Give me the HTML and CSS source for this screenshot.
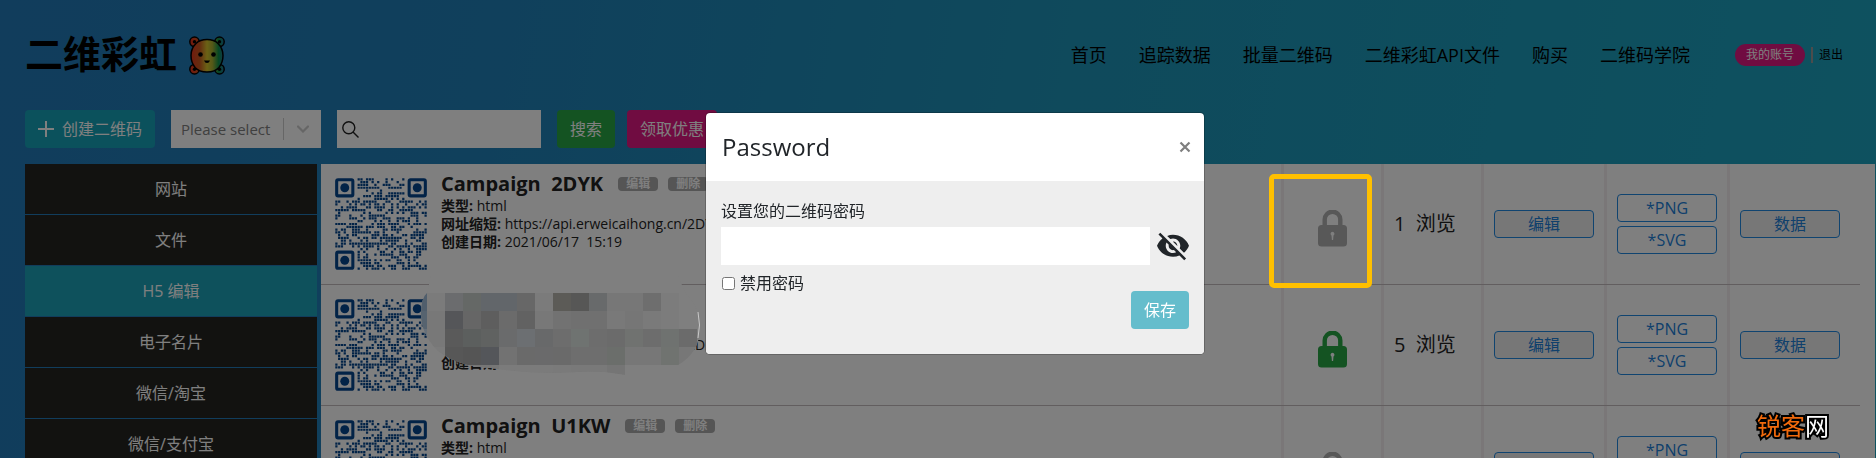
FILE: index.html
```html
<!DOCTYPE html>
<html lang="zh-CN">
<head>
<meta charset="utf-8">
<title>二维彩虹</title>
<link rel="stylesheet" href="styles.css">
</head>
<body>
<svg class="sprite" aria-hidden="true">
  <symbol id="qr" viewBox="0 0 33 33">
    <path id="qr-dots" fill="#04468e"/>
    <g fill="none" stroke="#04468e" stroke-width="1.1">
      <rect x=".6" y=".6" width="5.8" height="5.8" rx=".5"/>
      <rect x="26.6" y=".6" width="5.8" height="5.8" rx=".5"/>
      <rect x=".6" y="26.6" width="5.8" height="5.8" rx=".5"/>
    </g>
    <g fill="#04468e"><circle cx="3.5" cy="3.5" r="1.6"/><circle cx="29.5" cy="3.5" r="1.6"/><circle cx="3.5" cy="29.5" r="1.6"/></g>
  </symbol>
  <symbol id="lock" viewBox="0 0 29 37">
    <path d="M6.7 17V9.5a7.8 7.8 0 0 1 15.6 0V17" fill="none" stroke="currentColor" stroke-width="4.4"/>
    <path fill="currentColor" fill-rule="evenodd" d="M3.5 15h22a3.5 3.5 0 0 1 3.5 3.500v14.500a3.500 3.500 0 0 1-3.500 3.500h-22a3.500 3.500 0 0 1-3.500-3.500v-14.500a3.500 3.500 0 0 1 3.500-3.500zM14.500 21.800a2 2 0 0 0-1 3.700l.4 4.500h1.200l.4-4.500a2 2 0 0 0-1-3.700z"/>
  </symbol>
</svg>

<div class="page">
  <header class="header">
    <a class="brand" href="#">
      <span class="brand-name">二维彩虹</span>
      <svg class="brand-bear" viewBox="0 0 36 39" aria-hidden="true">
        <defs><linearGradient id="rainbow" x1="0" y1="0" x2="36" y2="0" gradientUnits="userSpaceOnUse"><stop offset=".05" stop-color="#e8341c"/><stop offset=".3" stop-color="#c95a20"/><stop offset=".5" stop-color="#d8c42c"/><stop offset=".65" stop-color="#a8b030"/><stop offset=".82" stop-color="#109048"/><stop offset="1" stop-color="#2068b0"/></linearGradient></defs>
        <g fill="url(#rainbow)" stroke="#000" stroke-width="1.500">
          <circle cx="5.500" cy="5.800" r="4.700"/><circle cx="30.500" cy="5.800" r="4.700"/><circle cx="5.500" cy="33.200" r="4.700"/><circle cx="30.500" cy="33.200" r="4.700"/>
          <path d="M18 3.500c5 0 8 1 11 4 4 4 5 8 5 12s-1 8-4 12c-3 3.500-7 4.500-12 4.500s-9-1-12-4.500c-3-4-4-8-4-12s1-8 5-12c3-3 6-4 11-4z"/>
        </g>
        <circle cx="5.500" cy="5.800" r="1.700"/><circle cx="30.500" cy="5.800" r="1.700"/><circle cx="5.500" cy="33.200" r="1.700"/><circle cx="30.500" cy="33.200" r="1.700"/>
        <circle cx="11.500" cy="18.500" r="2.300"/><circle cx="24.500" cy="18.500" r="2.300"/>
        <path d="M15 24.500h6q-1 2.500-3 2.500t-3-2.500z"/>
      </svg>
    </a>
    <nav class="nav">
      <a href="#">首页</a><a href="#">追踪数据</a><a href="#">批量二维码</a><a href="#">二维彩虹API文件</a><a href="#">购买</a><a href="#">二维码学院</a>
    </nav>
    <div class="account"><a class="account-pill" href="#">我的账号</a><a class="logout" href="#">退出</a></div>
  </header>

  <div class="toolbar">
    <button class="btn btn-info" type="button"><svg class="plus" viewBox="0 0 16 16" aria-hidden="true"><path d="M8 0v16M0 8h16" stroke="currentColor" stroke-width="2"/></svg>创建二维码</button>
    <div class="filter">
      <select class="filter-select" aria-label="筛选"><option>Please select</option></select>
      <svg class="filter-arrow" viewBox="0 0 12 8" aria-hidden="true"><path d="M1 1.500l5 5 5-5" fill="none" stroke="#ccc" stroke-width="2.200" stroke-linecap="round"/></svg>
    </div>
    <label class="search">
      <svg class="search-icon" viewBox="0 0 17 17" aria-hidden="true"><g fill="none" stroke="#222" stroke-width="1.400"><circle cx="6.800" cy="6.800" r="6"/><path d="M11 11l5.500 5.500"/></g></svg>
      <input class="search-input" type="text" aria-label="搜索">
    </label>
    <div class="actions">
      <button class="btn btn-success" type="button">搜索</button>
      <button class="btn btn-pink" type="button">领取优惠</button>
    </div>
  </div>

  <div class="content">
    <nav class="sidebar">
      <a href="#">网站</a><a href="#">文件</a><a class="active" href="#">H5 编辑</a><a href="#">电子名片</a><a href="#">微信/淘宝</a><a href="#">微信/支付宝</a>
    </nav>
    <main class="list">
      <article class="row">
        <div class="summary">
          <svg class="qr" role="img" aria-label="QR"><use href="#qr"/></svg>
          <div class="info">
            <div class="info-head"><h2>Campaign  2DYK</h2><button class="tag" type="button">编辑</button><button class="tag" type="button">删除</button></div>
            <p><b>类型:</b> html</p>
            <p><b>网址缩短:</b> https://api.erweicaihong.cn/2DYK</p>
            <p><b>创建日期:</b> 2021/06/17  15:19</p>
          </div>
        </div>
        <div class="cell cell-lock"><svg class="lock"><use href="#lock"/></svg><span class="highlight"></span></div>
        <div class="cell views">1  浏览</div>
        <div class="cell"><button class="outline tinted" type="button">编辑</button></div>
        <div class="cell"><button class="outline" type="button">*PNG</button><button class="outline" type="button">*SVG</button></div>
        <div class="cell"><button class="outline tinted" type="button">数据</button></div>
      </article>
      <article class="row">
        <div class="summary">
          <svg class="qr" role="img" aria-label="QR"><use href="#qr"/></svg>
          <div class="info">
            <div class="info-head"></div>
            <p></p>
            <p><b>网址缩短:</b> https://api.erweicaihong.cn/2D</p>
            <p><b>创建日期:</b></p>
          </div>
          <svg class="redaction" viewBox="0 0 280 104" aria-hidden="true">
            <defs><clipPath id="blob"><path d="M10 0H257L264 16Q279 32 279 52Q279 76 257 89H205V99L184 96Q165 95 138 97Q100 97 70 92Q38 91 17 75Q0 58 0 38Q0 22 6 17z"/></clipPath></defs>
            <g clip-path="url(#blob)" id="mosaic"><rect width="280" height="104" fill="#7f7f7f"/></g>
            <path d="M277 36q3 13 0 26" fill="none" stroke="#c8c8c8" stroke-width="1"/>
          </svg>
        </div>
        <div class="cell cell-lock"><svg class="lock lock-on"><use href="#lock"/></svg></div>
        <div class="cell views">5  浏览</div>
        <div class="cell"><button class="outline tinted" type="button">编辑</button></div>
        <div class="cell"><button class="outline" type="button">*PNG</button><button class="outline" type="button">*SVG</button></div>
        <div class="cell"><button class="outline tinted" type="button">数据</button></div>
      </article>
      <article class="row">
        <div class="summary">
          <svg class="qr" role="img" aria-label="QR"><use href="#qr"/></svg>
          <div class="info">
            <div class="info-head"><h2>Campaign  U1KW</h2><button class="tag" type="button">编辑</button><button class="tag" type="button">删除</button></div>
            <p><b>类型:</b> html</p>
          </div>
        </div>
        <div class="cell cell-lock"><svg class="lock"><use href="#lock"/></svg></div>
        <div class="cell views"></div>
        <div class="cell"><button class="outline tinted" type="button" aria-label="编辑"></button></div>
        <div class="cell"><button class="outline" type="button">*PNG</button><button class="outline" type="button" aria-label="*SVG"></button></div>
        <div class="cell"><button class="outline tinted" type="button" aria-label="数据"></button></div>
      </article>
    </main>
  </div>
</div>

<div class="backdrop"></div>
<div class="modal-layer">
  <section class="modal" role="dialog" aria-labelledby="modal-title">
    <header class="modal-header">
      <h1 id="modal-title">Password</h1>
      <button class="close" type="button" aria-label="Close"><svg viewBox="0 0 12 12"><path d="M1.500 1.500l9 9M10.500 1.500l-9 9" stroke="currentColor" stroke-width="2.200"/></svg></button>
    </header>
    <div class="modal-body">
      <label class="field-label" for="pw">设置您的二维码密码</label>
      <div class="field">
        <input class="field-input" id="pw" type="password">
        <button class="eye" type="button" aria-label="显示密码"><svg viewBox="1 2 22 21"><path fill="#212529" d="M12 7c2.760 0 5 2.240 5 5 0 .650-.130 1.260-.360 1.830l2.920 2.920c1.510-1.260 2.700-2.890 3.430-4.750-1.730-4.390-6-7.500-11-7.500-1.400 0-2.740.250-3.980.700l2.160 2.160C10.740 7.130 11.350 7 12 7zM2 4.270l2.280 2.280.460.460C3.080 8.300 1.780 10.020 1 12c1.730 4.390 6 7.500 11 7.500 1.550 0 3.030-.300 4.380-.840l.420.420L19.730 22 21 20.730 3.270 3 2 4.270zM7.530 9.800l1.550 1.550c-.050.210-.080.430-.080.650 0 1.660 1.340 3 3 3 .220 0 .440-.030.650-.080l1.550 1.550c-.670.330-1.410.530-2.200.530-2.760 0-5-2.240-5-5 0-.790.200-1.530.530-2.200zm4.310-.780l3.150 3.150.020-.160c0-1.660-1.340-3-3-3l-.170.010z"/></svg></button>
      </div>
      <label class="check"><input type="checkbox">禁用密码</label>
      <div class="modal-actions"><button class="btn btn-save" type="button">保存</button></div>
    </div>
  </section>
</div>
<div class="watermark"><span>锐客</span>网</div>
<script src="app.js"></script>
</body>
</html>
```
FILE: styles.css
```css
*, *::before, *::after { box-sizing: border-box; }
body {
  margin: 0;
  font: 16px/24px "Open Sans", "Noto Sans CJK SC", sans-serif;
  color: #212529;
}
a { color: inherit; text-decoration: none; }
button, input, select { font: inherit; color: inherit; }
button { padding: 0; border: 0; background: none; }
h1, h2, p { margin: 0; font-weight: 400; }
.sprite { position: absolute; width: 0; height: 0; }

.page {
  height: 100vh;
  overflow: hidden;
  background: linear-gradient(100deg, #227ab8, #2080b8 25%, #1e94b8 55%, #1ca4c0);
}

.header {
  display: flex;
  align-items: center;
  height: 110px;
  padding: 0 33px 0 25px;
  font-size: 18px;
  color: #000;
}
.brand { display: flex; align-items: center; gap: 12px; margin-right: auto; }
.brand-name { padding-bottom: 6px; font: 700 38px/40px "Noto Sans CJK SC", sans-serif; }
.brand-bear { width: 36px; height: 39px; }
.nav { display: flex; gap: 32px; }
.account { display: flex; align-items: center; gap: 6px; margin-left: 45px; font-size: 12px; line-height: 16px; }
.account-pill {
  padding: 3px 11px;
  border-radius: 11px;
  background: #e01882;
  color: #fff;
}
.logout { padding-left: 6px; border-left: 2px solid #999; }

.toolbar { display: flex; gap: 16px; height: 54px; padding-left: 25px; align-items: flex-start; }
.btn {
  height: 38px;
  padding: 0 13px;
  border-radius: 4px;
  color: #fff;
  white-space: nowrap;
}
.btn-info { display: flex; align-items: center; gap: 8px; background: #17a2b8; }
.btn-success { background: #28a745; }
.btn-pink { background: #e01882; }
.plus { width: 16px; height: 16px; }
.actions { display: flex; gap: 12px; }
.filter {
  display: flex;
  align-items: center;
  width: 150px;
  height: 38px;
  padding-right: 12px;
  background: #fff;
}
.filter-select {
  flex: 1;
  height: 22px;
  min-width: 0;
  margin-right: 13px;
  padding: 0 0 0 10px;
  border: 0;
  border-right: 1px solid #ccc;
  background: none;
  color: #808080;
  font-size: 15px;
  line-height: 20px;
  appearance: none;
}
.filter-arrow { width: 12px; height: 8px; }
.search { display: flex; align-items: center; width: 204px; height: 38px; padding: 0 5px; background: #fff; }
.search-icon { width: 17px; height: 17px; }
.search-input { flex: 1; min-width: 0; border: 0; background: none; }

.content { display: grid; grid-template-columns: 292px 1fr; gap: 4px; padding: 0 1px 0 25px; }
.sidebar a {
  display: block;
  height: 51px;
  padding-top: 13px;
  border-bottom: 1px solid #227ab8;
  background: #242420;
  color: #fff;
  text-align: center;
}
.sidebar .active { background: #1ca2b8; }

.list { padding-right: 15px; background: #fff; color: #222; }
.row {
  display: grid;
  grid-template-columns: 1fr 100px 100px 123px 123px 133px;
  grid-template-rows: 120px;
  border-bottom: 1px solid #c4bcbe;
}
.summary { position: relative; display: flex; gap: 14px; padding: 7px 0 0 14px; min-width: 0; }
.qr { width: 92px; height: 92px; margin-top: 7px; }
.info { font-size: 14px; line-height: 18px; }
.info p { min-height: 18px; white-space: pre; }
.info-head { display: flex; align-items: center; gap: 10px; height: 26px; }
.info-head h2 { margin-right: 5px; font-size: 20px; line-height: 26px; font-weight: 700; white-space: pre; }
.info-head .tag { height: 14px; width: 40px; border-radius: 4px; background: #aaa; color: #fff; font-size: 12px; line-height: 14px; font-weight: 700; }
.cell {
  position: relative;
  display: flex;
  flex-direction: column;
  justify-content: center;
  gap: 4px;
  padding: 0 10px;
  border-left: 3px solid #f5eff0;
}
.cell-lock { align-items: center; }
.views { font-size: 20px; white-space: pre; }
.lock { width: 29px; height: 37px; margin-top: 8px; color: #b0b0b0; }
.lock-on { color: #28a745; }
.outline {
  width: 100px;
  height: 28px;
  border: 1px solid #2088e0;
  border-radius: 4px;
  color: #2080d8;
}
.tinted { background: #efefef; }

.highlight {
  position: absolute;
  z-index: 3;
  left: -15px;
  top: 10px;
  width: 103px;
  height: 114px;
  border: 5px solid #ffc000;
  border-radius: 5px;
}
.redaction { position: absolute; z-index: 3; left: 100px; top: -9px; width: 280px; height: 104px; }

.backdrop { position: fixed; inset: 0; z-index: 2; background: rgba(0, 0, 0, .5); }
.modal-layer {
  position: fixed;
  inset: 0;
  z-index: 4;
  display: flex;
  justify-content: center;
  align-items: flex-start;
  padding: 112px 0 0 34px;
  pointer-events: none;
}
.modal {
  width: 500px;
  overflow: hidden;
  border: 1px solid rgba(0, 0, 0, .2);
  border-radius: 5px;
  background: #fff;
  background-clip: padding-box;
  pointer-events: auto;
}
.modal-header { display: flex; align-items: center; justify-content: space-between; height: 68px; padding: 0 13px 0 16px; }
.modal-header h1 { font-size: 24px; line-height: 32px; }
.close { display: flex; color: #7f7f7f; }
.close svg { width: 12px; height: 12px; }
.modal-body { padding: 18px 15px 25px; background: #eee; }
.field-label { display: block; }
.field { display: flex; align-items: center; gap: 7px; margin-top: 4px; }
.field-input { flex: 1; min-width: 0; height: 38px; border: 0; background: #fff; }
.eye { width: 32px; height: 31px; }
.eye svg { display: block; width: 32px; height: 31px; }
.check { display: flex; align-items: center; gap: 5px; margin-top: 10px; line-height: 16px; }
.check input { width: 13px; height: 13px; margin: 0 0 0 1px; }
.modal-actions { display: flex; justify-content: flex-end; }
.btn-save { background: #65bdcc; }

.watermark {
  position: fixed;
  z-index: 5;
  right: 47px;
  bottom: 16px;
  font-size: 24px;
  line-height: 32px;
  color: #fff;
  -webkit-text-stroke: 4px #000;
  paint-order: stroke fill;
}
.watermark span { color: #f26a0c; }
```
FILE: app.js
```js
// QR body: everything outside the three finder squares.
let seed = 20210617;
const next = () => (seed = (seed * 1103515245 + 12345) % 2147483648) / 2147483648;
let d = "";
for (let y = 0; y < 33; y++) {
  for (let x = 0; x < 33; x++) {
    const finder = (x < 8 && y < 8) || (x > 24 && y < 8) || (x < 8 && y > 24);
    if (next() < 0.5 && !finder) d += `M${x + 0.1} ${y + 0.1}h.8v.8h-.8z`;
  }
}
document.getElementById("qr-dots").setAttribute("d", d);

// Mosaic tiles, one array per 18px band; null leaves the base grey.
const tiles = [
  ["#505e6c", "#7b7b7b", "#6b6c6e", "#656866", "#62666a", "#62666a", "#676767", "#7b7b7b", "#5c5b57", "#575756", "#686a6b", "#777777", "#777777", "#6e6e6e", "#7c7c7c", null],
  ["#56636f", "#787878", "#555659", "#666666", "#5e5e5e", "#6b6b6b", "#626262", "#787878", "#727272", "#707070", "#707070", "#797979", "#767676", "#7a7a7a", "#7c7c7c", null],
  ["#66707a", "#787878", "#5a5a5a", "#5c5f5e", "#606261", "#6a6b6c", "#6c6f72", "#68696a", "#6d6d6d", "#6f7371", "#6d6d6d", "#6b6b6b", "#707270", "#6d6d6d", "#6f7270", "#6b6b6b"],
  [null, "#7b7b7b", "#575757", "#555555", "#54565a", "#727272", "#6a6a6a", "#6a6a6b", "#6a6a6a", "#6e6e6e", "#6e6e6e", "#6b6e6b", "#777777", "#777777", "#707370", "#777777"],
  [null, null, "#767676", "#767676", "#767676", "#7b7b7b", "#7b7b7b", "#7b7b7b", "#7a7a7a", "#797979", "#797979", "#757575", null, null, null, null]
];
const mosaic = document.getElementById("mosaic");
tiles.forEach((band, r) => band.forEach((fill, c) => {
  if (!fill) return;
  const t = document.createElementNS("http://www.w3.org/2000/svg", "rect");
  t.setAttribute("x", c * 18 - 12);
  t.setAttribute("y", 17 + r * 18);
  t.setAttribute("width", 18);
  t.setAttribute("height", 18);
  t.setAttribute("fill", fill);
  mosaic.append(t);
}));
```
